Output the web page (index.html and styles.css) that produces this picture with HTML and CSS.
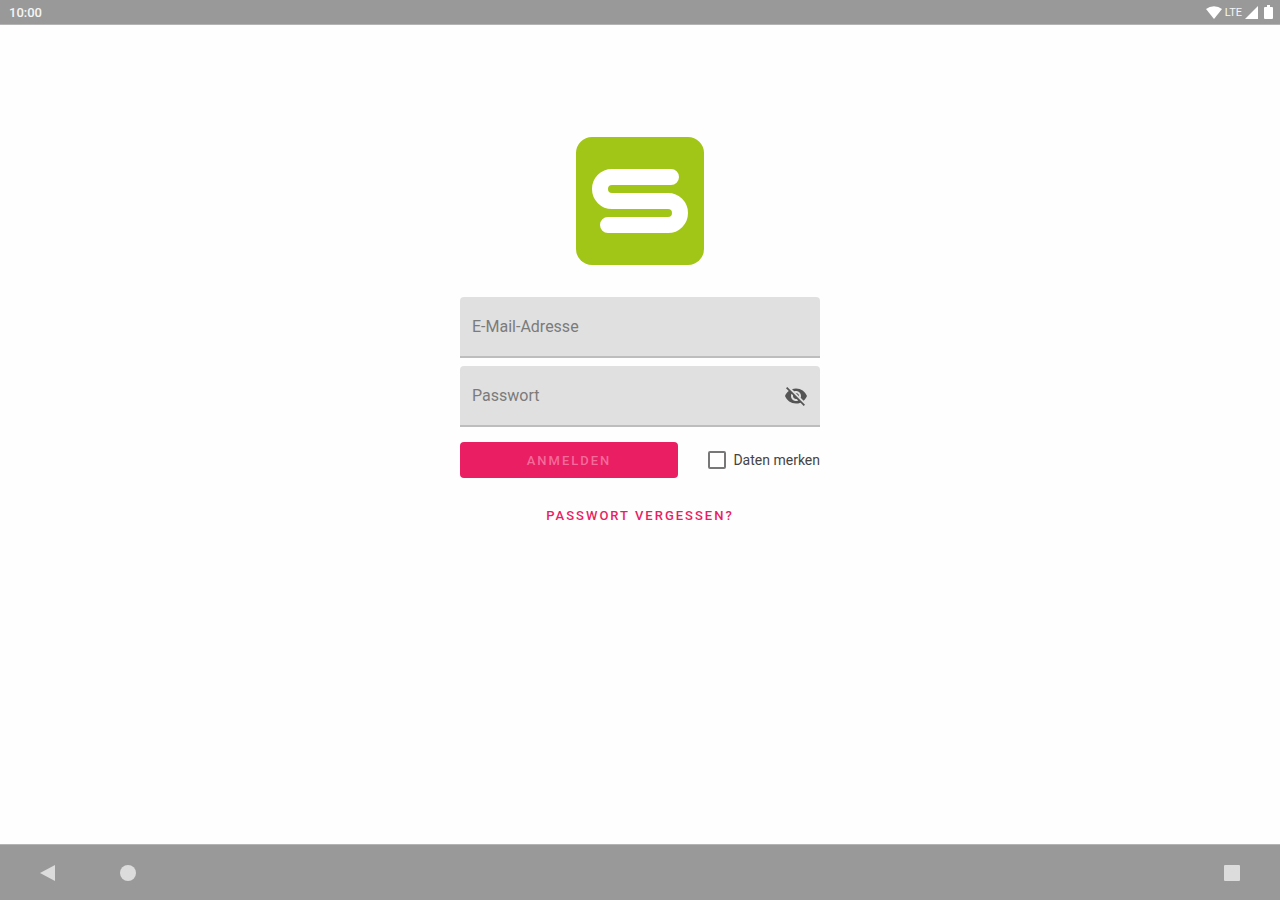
FILE: index.html
```html
<!DOCTYPE html>
<html lang="de">
<head>
    <meta charset="UTF-8">
    <meta name="viewport" content="width=device-width, initial-scale=1.0">
    <title>Anmelden</title>
    <link rel="stylesheet" href="styles.css">
</head>
<body>

    <header class="status-bar">
        <span>10:00</span>
        <div class="status-icons">
            <svg width="16" height="14" viewBox="0 0 16 14" aria-hidden="true">
                <path d="M8 14 0 4a13 13 0 0 1 16 0z"/>
            </svg>
            <span class="network">LTE</span>
            <svg width="13" height="13" viewBox="0 0 13 13" aria-hidden="true">
                <path d="M13 0v13H0z"/>
            </svg>
            <svg class="battery" width="9" height="14" viewBox="0 0 9 14" aria-hidden="true">
                <path d="M3 0h3v2h2q1 0 1 1v10q0 1-1 1H1q-1 0-1-1V3q0-1 1-1h2z"/>
            </svg>
        </div>
    </header>

    <main>
        <svg class="logo" viewBox="0 0 128 128" role="img" aria-label="Logo">
            <rect width="128" height="128" rx="16" fill="#a2c617"/>
            <path d="M95 40H36a12 12 0 0 0 0 24h56a12 12 0 0 1 0 24H32" fill="none" stroke="#fff" stroke-width="16" stroke-linecap="round"/>
        </svg>

        <form class="login">
            <div class="field">
                <input type="email" id="email" placeholder="E-Mail-Adresse" aria-label="E-Mail-Adresse">
            </div>
            <div class="field">
                <input type="password" id="password" placeholder="Passwort" aria-label="Passwort">
                <button type="button" class="toggle" aria-label="Passwort anzeigen">
                    <svg width="24" height="24" viewBox="0 0 24 24" aria-hidden="true">
                        <path d="M12 7c2.76 0 5 2.24 5 5 0 .65-.13 1.26-.36 1.83l2.92 2.92c1.51-1.26 2.7-2.89 3.43-4.75-1.73-4.39-6-7.5-11-7.5-1.4 0-2.74.25-3.98.7l2.16 2.16C10.74 7.13 11.35 7 12 7zM2 4.27l2.28 2.28.46.46C3.08 8.3 1.78 10.02 1 12c1.73 4.39 6 7.5 11 7.5 1.55 0 3.03-.3 4.38-.84l.42.42L19.73 22 21 20.73 3.27 3 2 4.27zM7.53 9.8l1.55 1.55c-.05.21-.08.43-.08.65 0 1.66 1.34 3 3 3 .22 0 .44-.03.65-.08l1.55 1.55c-.67.33-1.41.53-2.2.53-2.76 0-5-2.24-5-5 0-.79.2-1.53.53-2.2zm4.31-.78l3.15 3.15.02-.16c0-1.66-1.34-3-3-3l-.17.01z"/>
                    </svg>
                </button>
            </div>
            <div class="actions">
                <button type="submit" class="submit">ANMELDEN</button>
                <label class="remember" for="remember">
                    <input type="checkbox" id="remember">
                    Daten merken
                </label>
            </div>
            <a class="forgot" href="#">PASSWORT VERGESSEN?</a>
        </form>
    </main>

    <footer class="nav-bar">
        <button type="button" aria-label="Zurück">
            <svg width="16" height="16" viewBox="0 0 16 16"><path d="M0 8 15 0v16z"/></svg>
        </button>
        <button type="button" aria-label="Startseite">
            <svg width="16" height="16" viewBox="0 0 16 16"><circle cx="8" cy="8" r="8"/></svg>
        </button>
        <button type="button" class="recent" aria-label="Letzte Apps">
            <svg width="16" height="16" viewBox="0 0 16 16"><rect width="16" height="16" rx="1"/></svg>
        </button>
    </footer>

</body>
</html>
```

FILE: styles.css
```css
:root
{
    --main-color: #e91e63;
    --bar-color: #999999;
    --field-color: #e0e0e0;
}

*
{
    box-sizing: border-box;
    padding: 0;
    margin: 0;
    font-family: Roboto, sans-serif;
}

body
{
    min-height: 100vh;
    display: flex;
    flex-direction: column;
    background-color: #fefefe;
}

button
{
    border: none;
    background: none;
    cursor: pointer;
}

svg
{
    display: block;
}

.status-bar
{
    display: flex;
    justify-content: space-between;
    align-items: center;
    height: 25px;
    padding: 0 7px 0 9px;
    border-bottom: 1px solid #b4b4b4;
    background-color: var(--bar-color);
    color: #f5f5f5;
    font-size: 13px;
    font-weight: 500;
}

.status-icons
{
    display: flex;
    align-items: center;
    gap: 3px;
    fill: #ffffff;
}

.network
{
    font-size: 11px;
    font-weight: 400;
}

.battery
{
    margin-left: 3px;
}

main
{
    flex: 1;
    display: flex;
    flex-direction: column;
    align-items: center;
    gap: 32px;
    padding: 112px 16px 32px;
}

.logo
{
    width: 128px;
    height: 128px;
}

.login
{
    display: flex;
    flex-direction: column;
    gap: 8px;
    width: 100%;
    max-width: 360px;
}

.field
{
    display: flex;
    align-items: center;
    height: 61px;
    padding: 0 12px;
    border-bottom: 2px solid #bdbdbd;
    border-radius: 4px 4px 0 0;
    background-color: var(--field-color);
}

.field input
{
    flex: 1;
    min-width: 0;
    height: 100%;
    border: none;
    outline: none;
    background: none;
    font-size: 16px;
    color: #212121;
}

.field input::placeholder
{
    color: #7b7b7b;
}

.toggle
{
    fill: #555555;
}

.actions
{
    display: flex;
    justify-content: space-between;
    align-items: center;
    margin-top: 7px;
}

.submit
{
    width: 218px;
    height: 36px;
    border-radius: 4px;
    background-color: var(--main-color);
    color: #f46a9a;
    font-size: 13px;
    font-weight: 500;
    letter-spacing: 2px;
}

.remember
{
    display: flex;
    align-items: center;
    gap: 7px;
    font-size: 14px;
    color: #444444;
}

.remember input
{
    appearance: none;
    width: 18px;
    height: 18px;
    border: 2px solid #777777;
    border-radius: 2px;
}

.remember input:checked
{
    border-color: var(--main-color);
    background-color: var(--main-color);
}

.forgot
{
    align-self: center;
    margin-top: 20px;
    color: var(--main-color);
    font-size: 13px;
    font-weight: 500;
    line-height: 20px;
    letter-spacing: 2px;
    text-decoration: none;
}

.nav-bar
{
    display: flex;
    align-items: center;
    height: 56px;
    padding: 0 24px;
    border-top: 1px solid #b4b4b4;
    background-color: var(--bar-color);
    fill: #dcdcdc;
}

.nav-bar button
{
    display: flex;
    justify-content: center;
    width: 48px;
}

.nav-bar button + button
{
    margin-left: 32px;
}

.nav-bar .recent
{
    margin-left: auto;
}
```
